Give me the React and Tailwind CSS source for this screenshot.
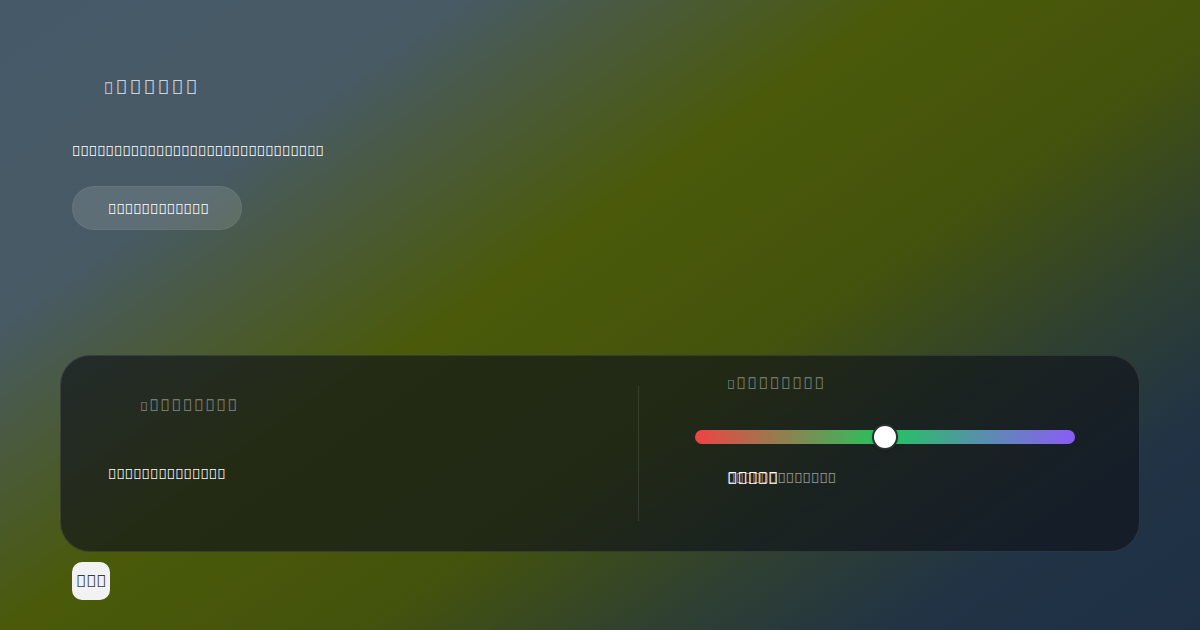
// Glyphs from the private-use block; the UI font has no drawing for them.
const glyphs = (n, seed = 0) =>
  Array.from({ length: n }, (_, i) => String.fromCharCode(0xe010 + seed + i)).join("");

function Heading({ count, seed, lead, className }) {
  return (
    <div className={className}>
      <span className={lead}>{glyphs(1, seed)}</span>
      {glyphs(count, seed + 1)}
    </div>
  );
}

export default function App() {
  return (
    <div
      className="h-[630px] w-[1200px] overflow-hidden bg-[linear-gradient(145deg,#465969_0%,#485a64_22%,#4a5a38_32%,#4a5a0a_43%,#44530c_60%,#2f4032_74%,#213345_86%,#1f3044_100%)] text-white"
      style={{ fontFamily: '"Noto Sans", sans-serif' }}
    >
      {/* Intro block */}
      <div className="px-[72px] pt-[77px]">
        <Heading
          count={6}
          seed={0}
          lead="text-[16px]"
          className="pl-8 text-[20px] leading-5 tracking-[0.1em] text-[#cbd5de]"
        />
        <p className="mt-[43px] text-[14px] leading-5 text-white">{glyphs(30, 20)}</p>
        <button className="mt-[25px] flex h-11 w-[170px] items-center rounded-full border border-white/5 bg-white/12 pl-[35px] text-[14px] text-white">
          {glyphs(12, 60)}
        </button>
      </div>

      {/* Settings card */}
      <div className="mx-[60px] mt-[125px] flex h-[197px] items-center rounded-[30px] border border-white/10 bg-[#0f131a]/65 pl-[47px] pr-16">
        <div className="flex-1 self-start pt-[39px]">
          <Heading
            count={8}
            seed={80}
            lead="text-[13px]"
            className="pl-8 text-[16px] leading-5 tracking-[0.1em] text-white/45"
          />
          <div className="mt-12 text-[14px] leading-5 text-white">{glyphs(14, 100)}</div>
        </div>

        <div className="mx-14 h-[135px] w-px bg-white/10" />

        <div className="w-[380px] self-start pt-[17px]">
          <Heading
            count={8}
            seed={120}
            lead="text-[13px]"
            className="pl-8 text-[16px] leading-5 tracking-[0.1em] text-white/45"
          />
          <div className="relative mt-[36px] h-[14px] rounded-full bg-[linear-gradient(90deg,#ef4444,#22c55e_50%,#8b5cf6)]">
            <div className="absolute left-1/2 top-1/2 h-[26px] w-[26px] -translate-x-1/2 -translate-y-1/2 rounded-full border-2 border-[#2a2f33] bg-white shadow-sm" />
          </div>
          <div className="relative mt-[24px] pl-8 text-[14px] leading-5">
            <span className="text-white/55">{glyphs(13, 140)}</span>
            <span className="absolute left-8 top-0 text-[17px] leading-5 text-white">{glyphs(5, 160)}</span>
          </div>
        </div>
      </div>

      {/* Corner badge */}
      <div className="ml-[72px] mt-[10px] flex h-[38px] w-[38px] items-center justify-center rounded-[10px] bg-[#f2f2f2] text-[17px] text-[#3a3a3a]">
        {glyphs(3, 180)}
      </div>
    </div>
  );
}
